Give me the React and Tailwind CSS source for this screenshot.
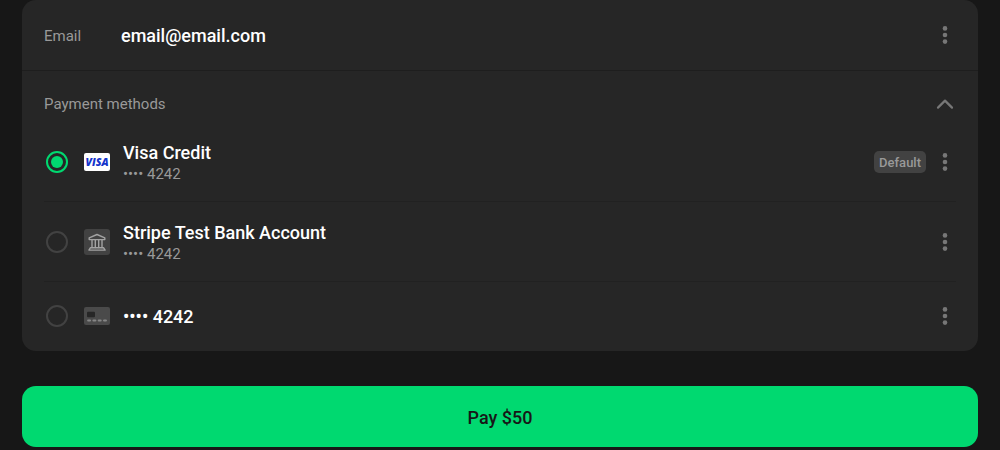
import { useState } from "react";

function Dots() {
  return (
    <svg viewBox="0 0 6 20" className="h-5 w-[6px]" fill="currentColor" aria-hidden="true">
      <circle cx="3" cy="3.4" r="2.3" />
      <circle cx="3" cy="10" r="2.3" />
      <circle cx="3" cy="16.6" r="2.3" />
    </svg>
  );
}

function MenuButton({ label }) {
  return (
    <button type="button" aria-label={label} className="flex h-9 w-[22px] items-center justify-center text-[#777777]">
      <Dots />
    </button>
  );
}

function VisaIcon() {
  return (
    <svg viewBox="0 0 26 18" className="h-[18px] w-[26px]" aria-hidden="true">
      <rect width="26" height="18" rx="2" fill="#ffffff" />
      <text x="13" y="13" textAnchor="middle" fill="#1434cb" fontFamily="'Open Sans', sans-serif" fontSize="10.5" fontWeight="800" fontStyle="italic">
        VISA
      </text>
    </svg>
  );
}

function BankIcon() {
  return (
    <svg viewBox="0 0 26 26" className="h-[26px] w-[26px]" fill="none" aria-hidden="true">
      <rect width="26" height="26" rx="3" fill="#424242" />
      <g stroke="#a3a3a3" strokeWidth="1.4" strokeLinejoin="round" strokeLinecap="round">
        <path d="M5.2 10.6V8.8L13 5.5l7.8 3.3v1.8Z" />
        <path d="M8 11v7.5M11.3 11v7.5M14.7 11v7.5M18 11v7.5" />
        <path d="M6.5 18.7h13l1.6 2.4H4.9Z" />
      </g>
    </svg>
  );
}

function CardIcon() {
  return (
    <svg viewBox="0 0 26 18" className="h-[18px] w-[26px]" aria-hidden="true">
      <rect width="26" height="18" rx="2" fill="#4a4a4a" />
      <rect x="3" y="4.7" width="8" height="5.6" rx="1" fill="#262626" />
      <path d="M4.2 13.5h1.8M9.5 13.5h1.8M14.8 13.5h1.8M20.1 13.5h1.8" stroke="#858585" strokeWidth="2.2" strokeLinecap="round" />
    </svg>
  );
}

const methods = [
  { id: "visa", icon: VisaIcon, title: "Visa Credit", detail: "•••• 4242", isDefault: true },
  { id: "bank", icon: BankIcon, title: "Stripe Test Bank Account", detail: "•••• 4242" },
  { id: "card", icon: CardIcon, title: "•••• 4242" },
];

function MethodRow({ method, checked, onSelect }) {
  const Icon = method.icon;
  return (
    <li className="flex items-center border-b border-[#212121] py-[17px] last:border-b-0 last:py-4 last:pb-[17px]">
      <input
        id={method.id}
        type="radio"
        name="method"
        checked={checked}
        onChange={onSelect}
        className="ml-0.5 h-[22px] w-[22px] shrink-0 appearance-none rounded-full border-2 border-[#424242] checked:border-[#00d970] checked:bg-[#00d970] checked:bg-clip-content checked:p-[3px]"
      />
      <label htmlFor={method.id} className="flex min-w-0 flex-1 items-center">
        <span className="ml-4 shrink-0">
          <Icon />
        </span>
        <span className="ml-[13px] flex flex-col pt-0.5">
          <span className="text-lg leading-6 font-medium text-white">{method.title}</span>
          {method.detail && <span className="text-[15px] leading-[19px] text-[#999999]">{method.detail}</span>}
        </span>
      </label>
      {method.isDefault && (
        <span className="mr-2 rounded-[5px] bg-[#424242] px-[5px] pt-0.5 text-[13px] leading-5 font-medium text-[#999999]">Default</span>
      )}
      <MenuButton label={"Options for " + method.title} />
    </li>
  );
}

export default function App() {
  const [selected, setSelected] = useState("visa");
  return (
    <main className="min-h-screen bg-[#171717] px-[22px] font-['Roboto',sans-serif]">
      <section className="rounded-[14px] bg-[#262626]">
        <div className="flex items-center border-b border-[#1e1e1e] px-[22px] py-[17px]">
          <span className="w-[77px] pt-0.5 text-[15px] leading-6 text-[#999999]">Email</span>
          <span className="flex-1 pt-0.5 text-lg leading-6 font-medium text-white">email@email.com</span>
          <MenuButton label="Email options" />
        </div>
        <div className="px-[22px]">
          <div className="flex items-center justify-between pt-[21px] pb-1.5">
            <h2 className="text-[15px] leading-6 text-[#999999]">Payment methods</h2>
            <button type="button" aria-label="Collapse payment methods" className="flex w-[22px] justify-center text-[#777777]">
              <svg viewBox="0 0 18 12" className="h-3 w-[18px]" fill="none" stroke="currentColor" strokeWidth="2.2" strokeLinecap="round" strokeLinejoin="round" aria-hidden="true">
                <path d="M2 9.6 9 2.6l7 7" />
              </svg>
            </button>
          </div>
          <ul>
            {methods.map((m) => (
              <MethodRow key={m.id} method={m} checked={selected === m.id} onSelect={() => setSelected(m.id)} />
            ))}
          </ul>
        </div>
      </section>
      <button type="button" className="mt-[35px] flex h-[61px] w-full items-center justify-center rounded-[14px] bg-[#00d970] pt-0.5 text-lg font-medium text-[#171717]">
        Pay $50
      </button>
    </main>
  );
}
